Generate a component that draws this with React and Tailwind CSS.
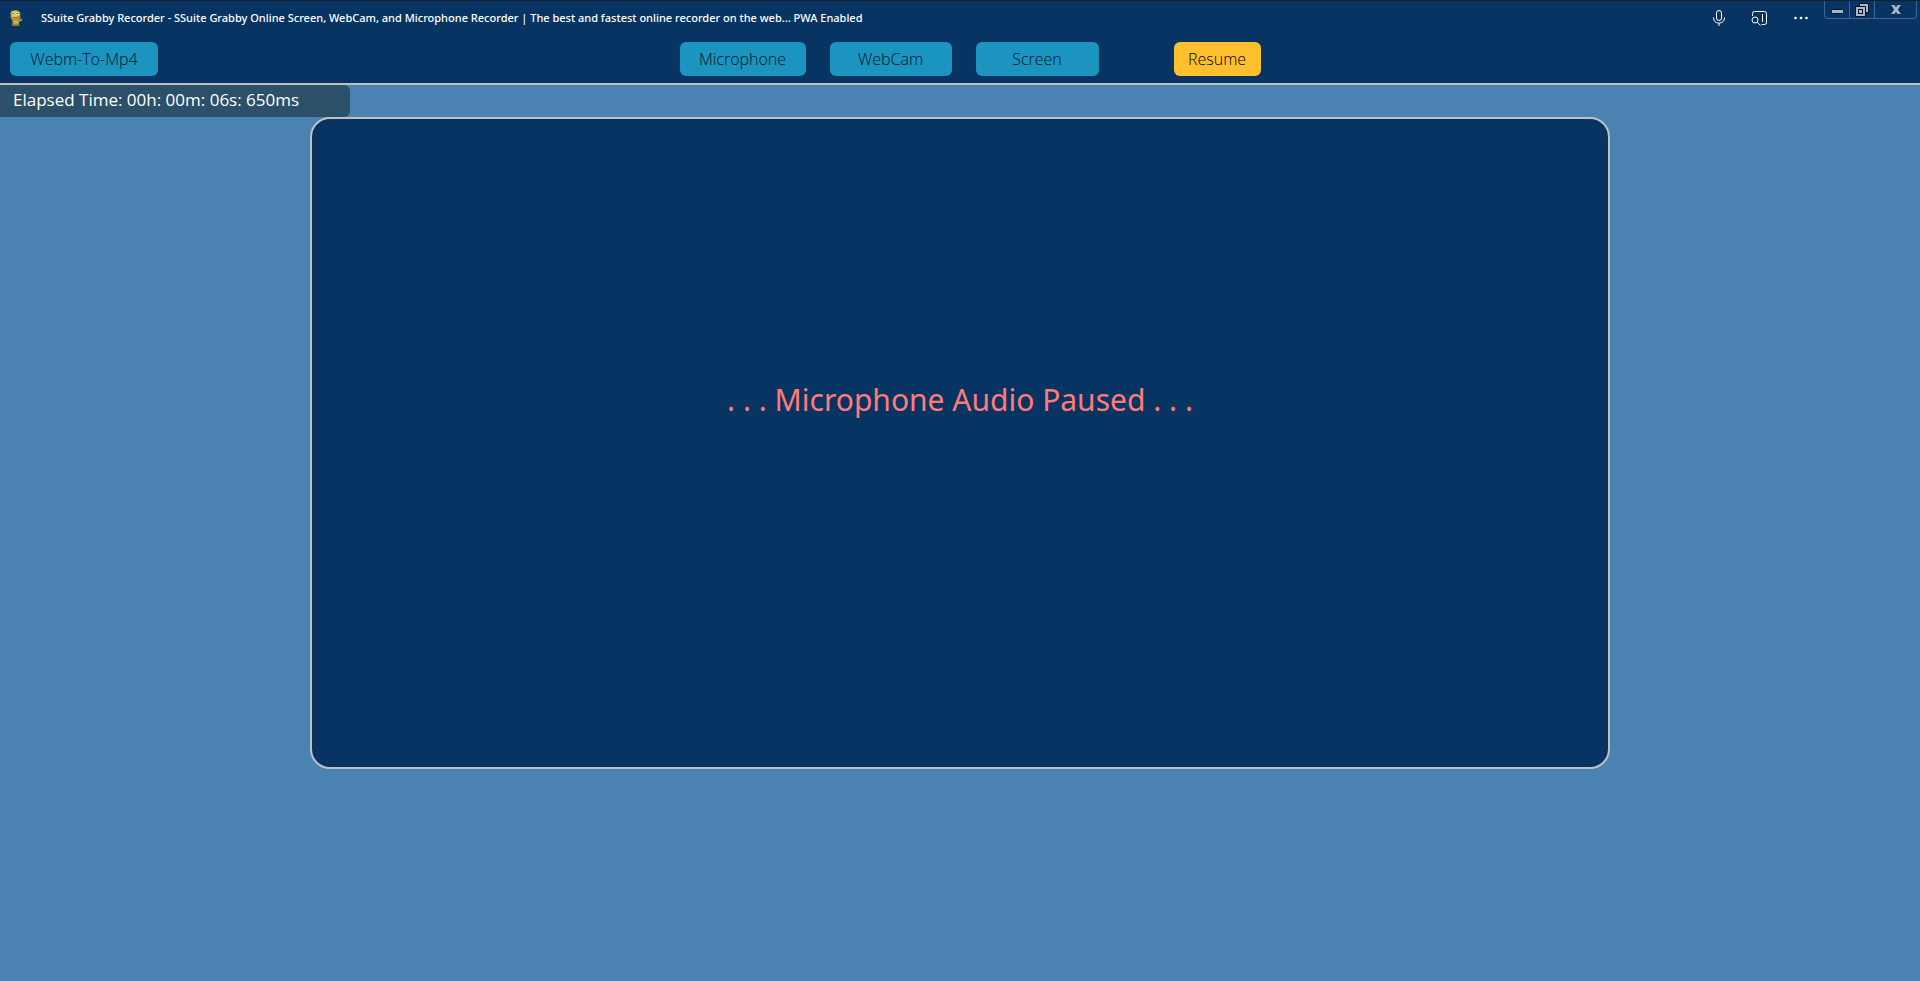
/**
 * Grabby Recorder - main window
 */

const SOURCES = [
  { label: 'Microphone', width: 'w-[126px]' },
  { label: 'WebCam', width: 'w-[122px]' },
  { label: 'Screen', width: 'w-[123px]' },
];

function Mascot() {
  return (
    <svg width="16" height="18" viewBox="0 0 16 18" className="shrink-0" aria-hidden="true">
      <path d="M2.5 4Q3 1 7.5 1Q12 1 12.5 4.5L12.5 8Q12 10 10.5 10.5L14 9.5L14 12L11.5 12.5L11 14.5L11.5 17L4 17L4.5 14L4 11L2.5 8.5Z" fill="#a8923a" />
      <path d="M4 2.8Q7.5 .8 11 3.5L11 8Q7.5 11 4 8Z" fill="#dcc850" />
      <path d="M6 11.5h4v3H6z" fill="#d0b944" />
      <circle cx="5" cy="4.5" r="1.6" fill="#f4f0dc" />
      <circle cx="9.5" cy="4.5" r="1.6" fill="#f4f0dc" />
      <circle cx="5" cy="4.5" r="0.8" fill="#2a3548" />
      <circle cx="9.5" cy="4.5" r="0.8" fill="#2a3548" />
      <path d="M5 8.2Q8 9.6 11 7.6" stroke="#a4502c" strokeWidth="1" fill="none" />
      <path d="M4.5 16.4h2.8M8.5 16.4h2.8" stroke="#7a6c30" strokeWidth="1.2" />
    </svg>
  );
}

function TitleActions() {
  return (
    <div className="mr-px flex h-[34px] items-center text-white">
      <button type="button" aria-label="Microphone access" className="flex w-10 justify-center">
        <svg width="12" height="16" viewBox="0 0 12 16" fill="none" stroke="currentColor">
          <rect x="3.5" y="0.5" width="5" height="10" rx="2.5" />
          <path d="M0.5 7.5v.5a5 5 0 0 0 5 5h1a5 5 0 0 0 5-5v-.5M6 13v3" />
        </svg>
      </button>
      <button type="button" aria-label="Find in page" className="flex w-10 justify-center">
        <svg width="16" height="16" viewBox="0 0 16 16" fill="none" stroke="currentColor">
          <path d="M1.5 6V3.5a2 2 0 0 1 2-2h10a2 2 0 0 1 2 2v9a2 2 0 0 1-2 2h-3M11.5 4v8" />
          <circle cx="4" cy="10" r="3" />
          <path d="M6.2 12.2L9.5 15.5" />
        </svg>
      </button>
      <button type="button" aria-label="More" className="flex w-11 justify-center">
        <svg width="14" height="4" viewBox="0 0 14 4" fill="currentColor">
          <circle cx="1.5" cy="2" r="1.3" />
          <circle cx="7" cy="2" r="1.3" />
          <circle cx="12.5" cy="2" r="1.3" />
        </svg>
      </button>
    </div>
  );
}

function WindowControls() {
  return (
    <div className="mr-[3px] flex h-[18px] rounded-b border border-t-0 border-[#42658b] text-[#a9b6c8]">
      <button type="button" aria-label="Minimize" className="flex w-[25px] items-center justify-center border-r border-[#42658b]">
        <svg width="13" height="13" viewBox="0 0 13 13">
          <rect x="0.5" y="6.5" width="12" height="4" rx="1" fill="currentColor" stroke="#04172f" />
        </svg>
      </button>
      <button type="button" aria-label="Restore" className="flex w-[25px] items-center justify-center border-r border-[#42658b]">
        <svg width="14" height="14" viewBox="0 0 14 14">
          <path d="M4.5 .5h9v9h-9z" fill="currentColor" stroke="#04172f" />
          <path d="M.5 3.5h10v10H.5z" fill="currentColor" stroke="#04172f" />
          <rect x="3.5" y="6.5" width="4" height="4" fill="currentColor" stroke="#04172f" />
        </svg>
      </button>
      <button type="button" aria-label="Close" className="flex w-[41px] items-center justify-center">
        <svg width="12" height="12" viewBox="0 0 12 12">
          <path d="M2 1.5L10 9.5M10 1.5L2 9.5" stroke="#04172f" strokeWidth="4" />
          <path d="M1 1h3.5L6 3.3 7.5 1H11L8 5.5 11 10H7.5L6 7.7 4.5 10H1L4 5.5z" fill="currentColor" />
        </svg>
      </button>
    </div>
  );
}

function TitleBar() {
  return (
    <div className="flex h-9 items-start border-t border-[#16202d]">
      <div className="flex h-[34px] flex-1 items-center gap-[17px] pl-2">
        <Mascot />
        <h1 className="font-['Noto_Sans',sans-serif] text-[11px] font-medium whitespace-nowrap text-white">
          SSuite Grabby Recorder - SSuite Grabby Online Screen, WebCam, and Microphone Recorder | The best and fastest online recorder on the web... PWA Enabled
        </h1>
      </div>
      <TitleActions />
      <WindowControls />
    </div>
  );
}

function Toolbar() {
  const button = 'h-[34px] rounded-md bg-[#1b95c0] text-[#00142a]';
  return (
    <nav className="flex pt-[6px] pb-[7px] pl-[10px] font-['Open_Sans',sans-serif] text-[16px] font-light">
      <div className="flex flex-1">
        <button type="button" className={`${button} w-[148px]`}>Webm-To-Mp4</button>
      </div>
      <div className="ml-[10px] flex">
        <div className="flex gap-6">
          {SOURCES.map((source) => (
            <button key={source.label} type="button" className={`${button} ${source.width}`}>
              {source.label}
            </button>
          ))}
        </div>
        <button type="button" className="ml-[75px] h-[34px] w-[87px] rounded-md bg-[#ffc02e] text-black">
          Resume
        </button>
      </div>
      <div className="flex-1" />
    </nav>
  );
}

export default function App() {
  return (
    <div className="flex min-h-screen flex-col bg-[#4a82b1]">
      <header className="border-b-2 border-[#c0c0c0] bg-[#083464]">
        <TitleBar />
        <Toolbar />
      </header>
      <main className="font-['Noto_Sans',sans-serif]">
        <p className="h-8 w-[350px] rounded-r-md bg-[#2c4f6a] pl-[13px] font-['Open_Sans',sans-serif] text-[17px] leading-[30px] font-medium text-white">
          Elapsed Time: 00h: 00m: 06s: 650ms
        </p>
        <section className="mx-auto h-[652px] w-[1300px] max-w-full rounded-[20px] border-2 border-[#c0c0c0] bg-[#083464] pt-[261px] text-center">
          <p className="text-[30px] leading-10 text-[#ff7b76]">. . . Microphone Audio Paused . . .</p>
        </section>
      </main>
    </div>
  );
}
